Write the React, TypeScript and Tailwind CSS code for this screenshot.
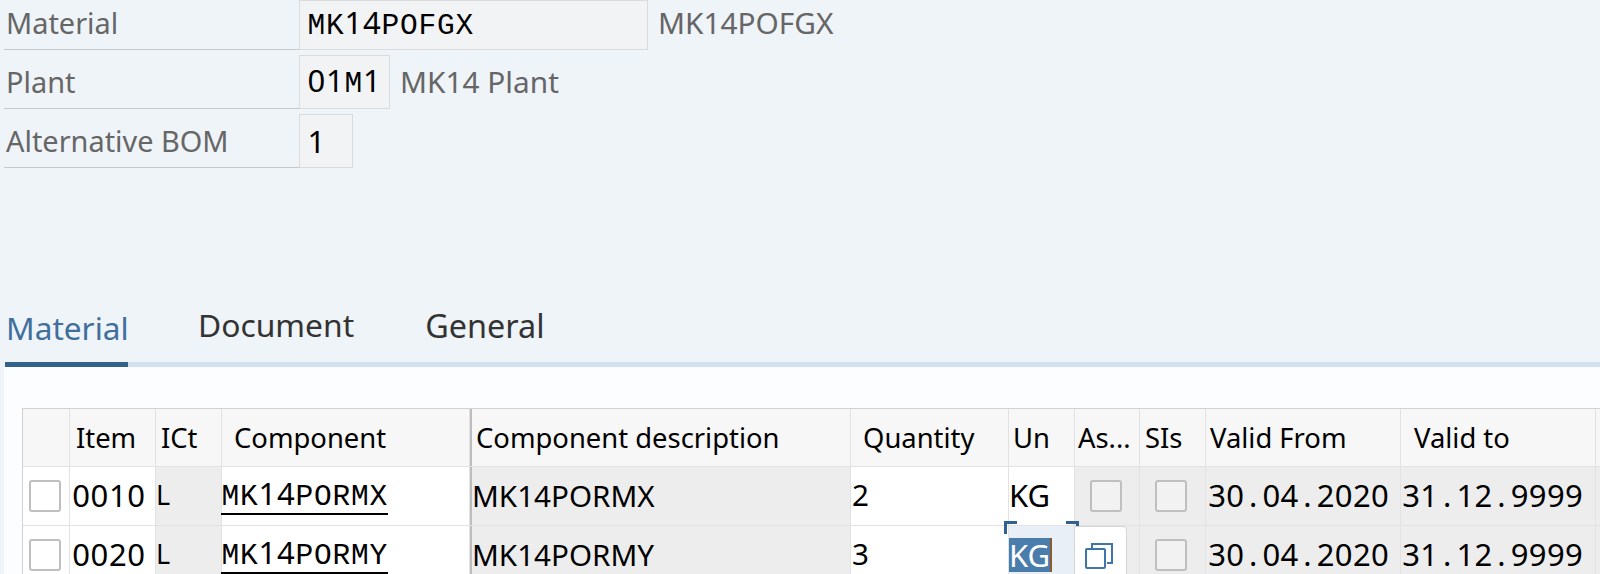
const sans = "font-['Noto_Sans','Open_Sans',sans-serif]";

function Mono({ text, w = 18.5, className = "" }: { text: string; w?: number; className?: string }) {
  return (
    <span className={`inline-flex items-baseline ${className}`}>
      {text.split("").map((c, i) => (
        <span
          key={i}
          style={{ width: w }}
          className={`inline-block text-center ${/[0-9.]/.test(c) ? "text-[31px] font-['Noto_Sans',sans-serif]" : "text-[29.5px] font-['Liberation_Mono',monospace]"}`}
        >
          {c}
        </span>
      ))}
    </span>
  );
}

function Field({ label, value, desc, inputW, h, mt, shift = "" }: { label: string; value: string; desc: string; inputW: string; h: string; mt: string; shift?: string }) {
  return (
    <div className={`flex items-stretch ${mt} ${h}`}>
      <div className={`w-[295px] ml-1 pl-[2px] flex items-center border-b border-[#c6c9cc] text-[28.9px] text-[#666] ${shift}`}>{label}</div>
      <div className={`${inputW} pl-[7px] flex items-center bg-[#f2f3f4] border border-[#d9dbdd] text-black ${shift}`}>
        <Mono text={value} />
      </div>
      {desc && <div className={`ml-[10px] flex items-center text-[29.8px] text-[#666] ${shift}`}>{desc}</div>}
    </div>
  );
}

const cols = [47, 86, 66, 248, 381, 158, 66, 65, 66, 195, 195, 40];

function Cell({ i, className = "", children }: { i: number; className?: string; children?: React.ReactNode }) {
  return (
    <div style={{ width: cols[i] }} className={`shrink-0 relative flex items-center border-r border-[#e2e2e2] ${className}`}>
      {children}
    </div>
  );
}

function Box({ bg = "bg-white" }: { bg?: string }) {
  return <div className={`w-[32px] h-[32px] rounded-[3px] border-2 border-[#bfbfbf] ${bg}`} />;
}

const head: [string, string][] = [
  ["", ""],
  ["Item", "pl-[6px]"],
  ["ICt", "pl-[5px]"],
  ["Component", "pl-[12px]"],
  ["Component description", "pl-[4px]"],
  ["Quantity", "pl-[12px]"],
  ["Un", "pl-[4px]"],
  ["As...", "pl-[3px]"],
  ["SIs", "pl-[5px]"],
  ["Valid From", "pl-[4px]"],
  ["Valid to", "pl-[13px]"],
  ["", ""],
];

function Row({ item, comp, qty, focus }: { item: string; comp: string; qty: string; focus?: boolean }) {
  return (
    <div className="flex h-[59px] border-b border-[#e2e2e2] text-black text-[29.6px]">
      <Cell i={0} className="bg-white pl-[6px]"><Box /></Cell>
      <Cell i={1} className="bg-white pl-[2px] pb-[2px]"><Mono text={item} w={18.3} /></Cell>
      <Cell i={2} className="bg-[#ededed] pl-0 pb-[2px]"><span className="text-[27px]">L</span></Cell>
      <Cell i={3} className="bg-white">
        <Mono text={comp} className="-ml-[1px] border-b-2 border-black leading-[31px]" />
      </Cell>
      <Cell i={4} className="bg-[#ededed] border-l-2 border-l-[#bdbdbd]">{comp}</Cell>
      <Cell i={5} className="bg-white pl-[1px] pb-[2px]">{qty}</Cell>
      <Cell i={6} className={focus ? "bg-[#e8eff6] pl-0 text-[31px]" : "bg-white pl-0 pb-[2px] text-[31px]"}>
        {focus ? (
          <>
            <span className="bg-[#4a7dab] text-white border-r-2 border-r-[#8a5a2b] leading-[34px]">KG</span>
            <span className="absolute -left-[5px] -top-[5px] w-[13px] h-[13px] border-l-[3px] border-t-[3px] border-[#2f628f]" />
            <span className="absolute -right-[5px] -top-[5px] w-[13px] h-[13px] border-r-[3px] border-t-[3px] border-[#2f628f]" />
          </>
        ) : "KG"}
      </Cell>
      <Cell i={7} className="bg-[#ededed] justify-center pr-[2px]">
        {focus ? (
          <div className="absolute -left-[1px] top-0 w-[53px] h-[60px] bg-white border border-[#d5d5d5] rounded-tr-[4px] z-10 flex items-start pl-[10px] pt-[16px]">
            <svg width="28" height="26" viewBox="0 0 28 26" fill="none" stroke="#3f76a8" strokeWidth="2">
              <rect x="1" y="6" width="19" height="19" rx="1" />
              <path d="M7 5V1h20v19h-5" />
            </svg>
          </div>
        ) : <Box bg="bg-[#f2f2f2]" />}
      </Cell>
      <Cell i={8} className="bg-[#ededed] justify-center pr-[4px]"><Box bg="bg-[#f2f2f2]" /></Cell>
      <Cell i={9} className="bg-[#ededed] pl-[2px] pb-[2px]"><Mono text="30.04.2020" w={18.1} /></Cell>
      <Cell i={10} className="bg-[#ededed] pl-[1px] pb-[2px]"><Mono text="31.12.9999" w={18.1} /></Cell>
      <Cell i={11} className="bg-[#ededed]" />
    </div>
  );
}

export default function App() {
  return (
    <div className={`w-[1600px] h-[574px] overflow-hidden bg-[#eff4f9] ${sans}`}>
      <Field label="Material" value="MK14POFGX" desc="MK14POFGX" inputW="w-[349px]" h="h-[50px]" mt="mt-0" shift="pb-[3px]" />
      <Field label="Plant" value="01M1" desc="MK14 Plant" inputW="w-[91px]" h="h-[54px]" mt="mt-[5px]" />
      <Field label="Alternative BOM" value="1" desc="" inputW="w-[54px]" h="h-[54px]" mt="mt-[5px]" />

      <div className="mt-[130px] ml-[5px] h-[69px] flex items-stretch border-b-[5px] border-[#d3e1ef] relative">
        <div className="w-[123px] -mb-[5px] border-b-[5px] border-[#346187] pl-[1px] pt-[6px] text-[31.6px] text-[#3f6f9c]">Material</div>
        <div className="ml-[70px] text-[31.8px] text-[#333] pt-[3px]">Document</div>
        <div className="ml-[71px] text-[32.4px] text-[#333] pt-[3px]">General</div>
      </div>

      <div className="ml-1 bg-[#fcfdfe] pt-[41px] pl-[18px] h-[300px] overflow-hidden">
        <div className="w-[1700px] border-t border-l border-[#d2d2d2]">
          <div className="flex h-[58px] bg-[#f7f7f7] border-b border-[#e2e2e2] text-[27.4px] text-black">
            {head.map(([t, p], i) => (
              <Cell key={i} i={i} className={`${p} ${i === 4 ? "border-l-2 border-l-[#bdbdbd]" : ""}`}>{t}</Cell>
            ))}
          </div>
          <Row item="0010" comp="MK14PORMX" qty="2" />
          <Row item="0020" comp="MK14PORMY" qty="3" focus />
        </div>
      </div>
    </div>
  );
}
